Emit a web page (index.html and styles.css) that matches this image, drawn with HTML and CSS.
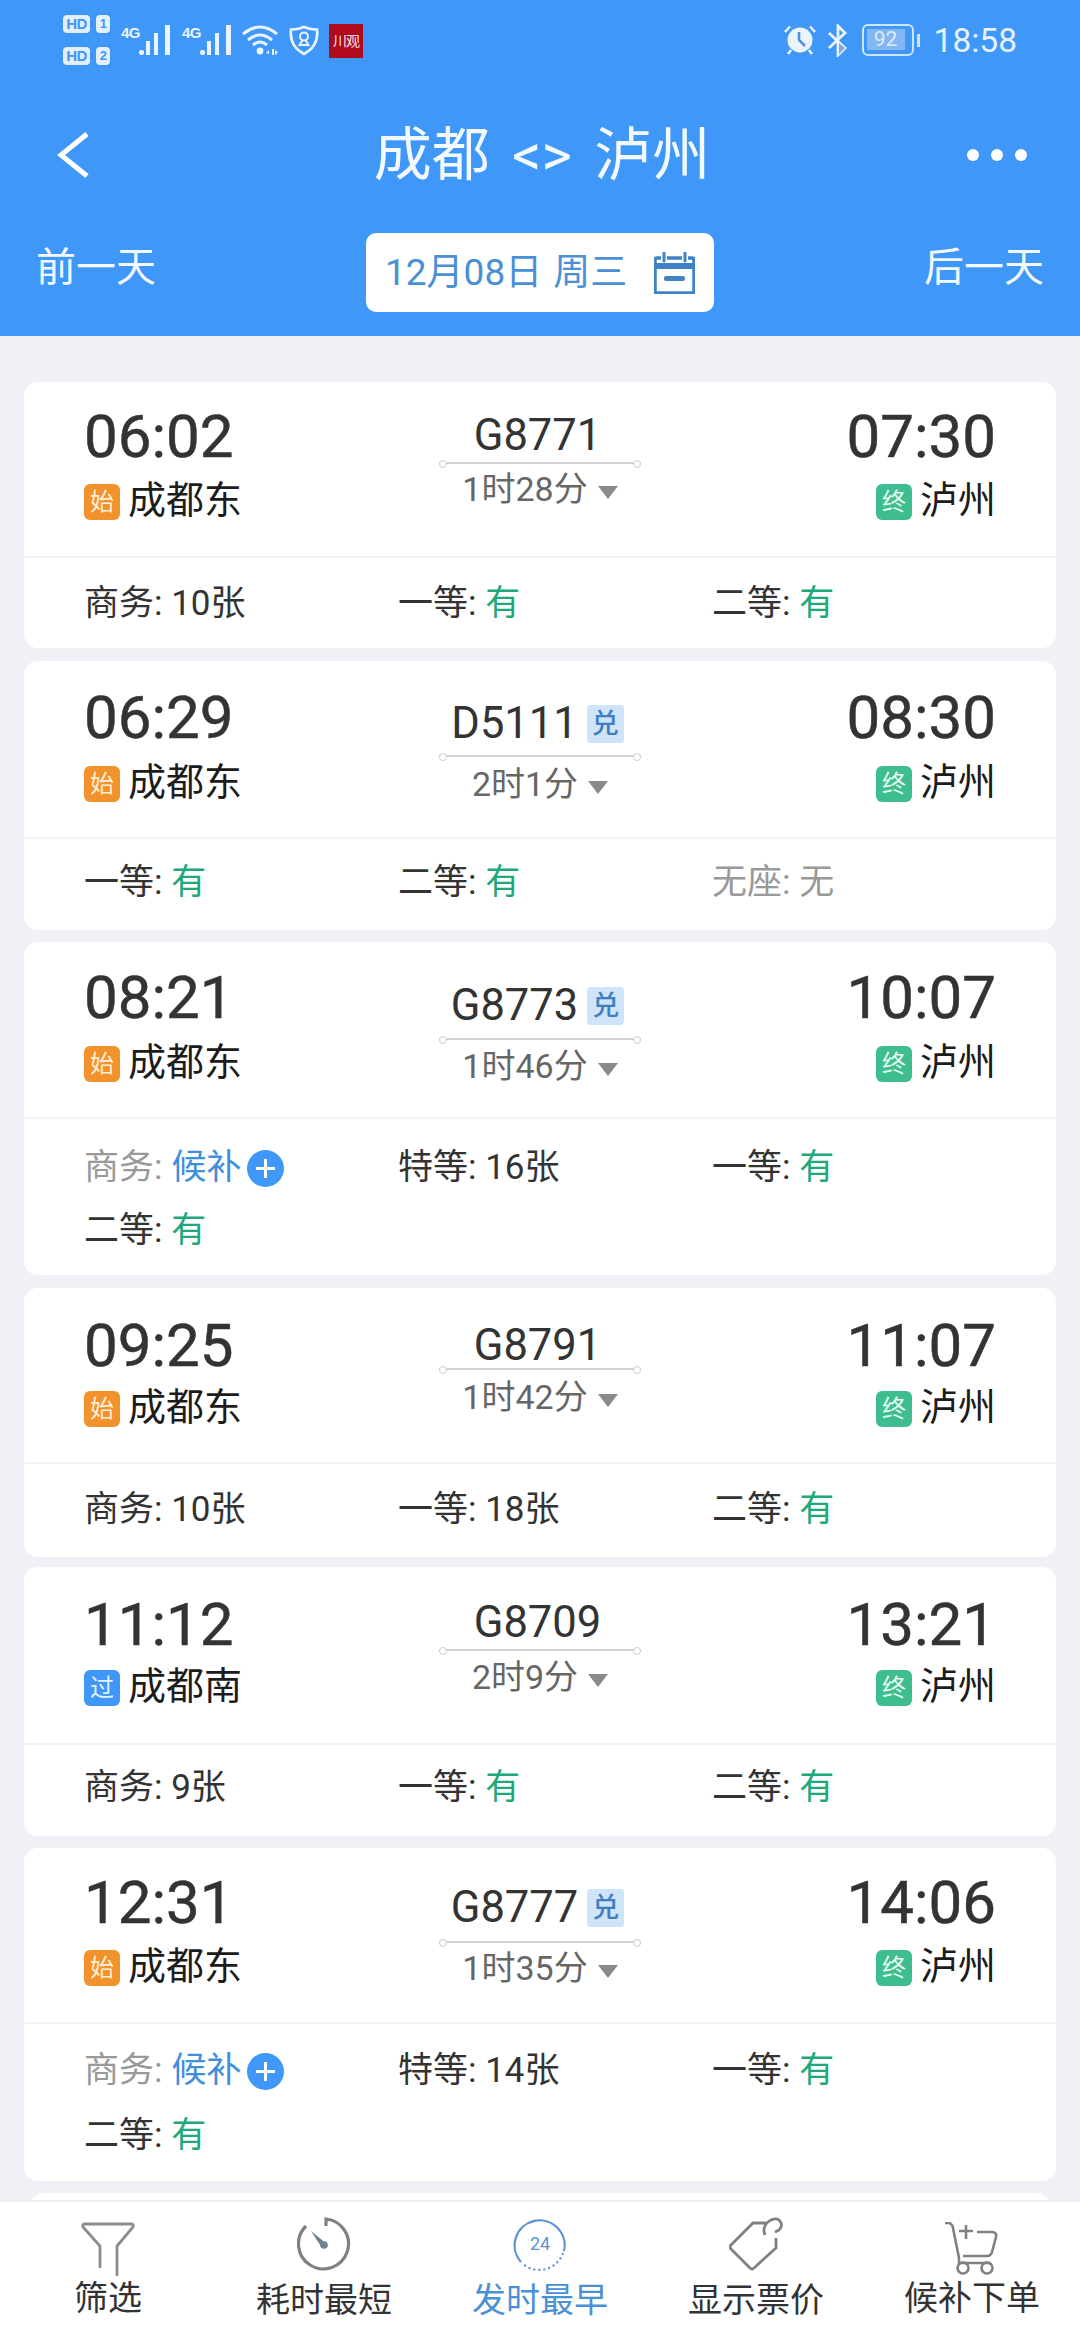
FILE: index.html
```html
<!DOCTYPE html>
<html lang="zh-CN">
<head>
<meta charset="utf-8">
<title>成都 &lt;&gt; 泸州</title>
<link rel="stylesheet" href="styles.css">
</head>
<body>
<div class="app">
  <header class="head">
    <div class="status">
      <div class="status-left">
        <div class="hd">
          <div class="hd-row"><span class="chip">HD</span><span class="chip num">1</span></div>
          <div class="hd-row"><span class="chip">HD</span><span class="chip num">2</span></div>
        </div>
        <svg class="sig" viewBox="0 0 50 30"><text x="0" y="13" class="sig-t">4G</text><rect x="18" y="25" width="5" height="5" rx="2"/><rect x="25" y="16" width="4" height="14"/><rect x="33" y="8" width="4" height="22"/><rect x="44" y="0" width="5" height="30"/></svg>
        <svg class="sig" viewBox="0 0 50 30"><text x="0" y="13" class="sig-t">4G</text><rect x="18" y="25" width="5" height="5" rx="2"/><rect x="25" y="16" width="4" height="14"/><rect x="33" y="8" width="4" height="22"/><rect x="44" y="0" width="5" height="30"/></svg>
        <svg class="wifi" viewBox="0 0 37 30"><g fill="none" stroke="#eaf3fe" stroke-width="3"><path d="M1 9Q18-5 35 9"/><path d="M6 15Q18 5 30 15"/><path d="M11 20Q18 14 25 20"/></g><circle cx="18" cy="26" r="3.4" fill="#eaf3fe"/><path d="M24 28l3-3v4zM30 24h2v6h-2zM33 25l3 2.500-3 2.500z" fill="#eaf3fe"/></svg>
        <svg class="shield" viewBox="0 0 30 31"><path d="M15 2Q22 5 28 4.500Q30 21 15 29Q0 21 2 4.500Q8 5 15 2Z" fill="none" stroke="#eaf3fe" stroke-width="2.600"/><circle cx="15" cy="11.500" r="4" fill="none" stroke="#eaf3fe" stroke-width="2"/><path d="M13.500 15L10.500 20H19.500L16.500 15" fill="none" stroke="#eaf3fe" stroke-width="2"/></svg>
        <span class="mark">川观</span>
      </div>
      <div class="status-right">
        <svg class="alarm" viewBox="0 0 32 30"><circle cx="16" cy="15" r="12.500" fill="#eaf3fe"/><path d="M15 7V15L21 21" fill="none" stroke="#4f90d8" stroke-width="2.500"/><path d="M1 7L6 1.500M31 7L26 1.500M4 29L7 25M28 29L25 25" stroke="#eaf3fe" stroke-width="2.500"/></svg>
        <svg class="bt" viewBox="0 0 22 33"><path d="M2 9L18 24L11 31V2L18 9L2 24" fill="none" stroke="#eaf3fe" stroke-width="2.800"/><path d="M12 19L18 24L12 30Z" fill="#7fa8e8"/></svg>
        <div class="batt"><span class="batt-body"><span class="batt-fill">92</span></span><span class="batt-nub"></span></div>
        <span class="clock">18:58</span>
      </div>
    </div>
    <div class="nav">
      <svg class="back" viewBox="0 0 32 46"><path d="M30 2L4 23L30 44" fill="none" stroke="#fff" stroke-width="5"/></svg>
      <h1 class="title">成都 &lt;&gt; 泸州</h1>
      <div class="dots"><i></i><i></i><i></i></div>
    </div>
    <div class="dates">
      <span class="day">前一天</span>
      <div class="date-box">
        <span class="date-text">12月08日 周三</span>
        <svg class="cal" viewBox="0 0 41 42"><path d="M3 6H38Q40 6 40 8V39Q40 41 38 41H3Q1 41 1 39V8Q1 6 3 6Z" fill="none" stroke="#3f83c6" stroke-width="3.500"/><path d="M1 14H40" stroke="#3f83c6" stroke-width="6"/><path d="M10 1V10M31 1V10" stroke="#fff" stroke-width="6"/><path d="M10 1V9M31 1V9" stroke="#3f83c6" stroke-width="3" stroke-linecap="round"/><rect x="10" y="24" width="21" height="5" rx="2" fill="#3f83c6"/></svg>
      </div>
      <span class="day">后一天</span>
    </div>
  </header>

  <main class="list">
    <article class="card c1">
      <div class="trip">
        <div class="end"><div class="time">06:02</div><div class="station"><span class="tag orange">始</span>成都东</div></div>
        <div class="train"><div class="no-row"><span class="no">G8771</span></div><div class="rule"></div><div class="dur">1时28分<i class="tri"></i></div></div>
        <div class="end right"><div class="time">07:30</div><div class="station"><span class="tag green">终</span>泸州</div></div>
      </div>
      <div class="fares">
        <span>商务: 10张</span><span>一等: <b class="yes">有</b></span><span>二等: <b class="yes">有</b></span>
      </div>
    </article>

    <article class="card c2">
      <div class="trip">
        <div class="end"><div class="time">06:29</div><div class="station"><span class="tag orange">始</span>成都东</div></div>
        <div class="train"><div class="no-row"><span class="no">D5111</span><span class="dui">兑</span></div><div class="rule"></div><div class="dur">2时1分<i class="tri"></i></div></div>
        <div class="end right"><div class="time">08:30</div><div class="station"><span class="tag green">终</span>泸州</div></div>
      </div>
      <div class="fares">
        <span>一等: <b class="yes">有</b></span><span>二等: <b class="yes">有</b></span><span class="off">无座: 无</span>
      </div>
    </article>

    <article class="card c3">
      <div class="trip">
        <div class="end"><div class="time">08:21</div><div class="station"><span class="tag orange">始</span>成都东</div></div>
        <div class="train"><div class="no-row"><span class="no">G8773</span><span class="dui">兑</span></div><div class="rule"></div><div class="dur">1时46分<i class="tri"></i></div></div>
        <div class="end right"><div class="time">10:07</div><div class="station"><span class="tag green">终</span>泸州</div></div>
      </div>
      <div class="fares">
        <span class="wait"><span class="off">商务:</span> <b class="blue">候补</b><i class="plus"></i></span><span>特等: 16张</span><span>一等: <b class="yes">有</b></span><span>二等: <b class="yes">有</b></span>
      </div>
    </article>

    <article class="card c4">
      <div class="trip">
        <div class="end"><div class="time">09:25</div><div class="station"><span class="tag orange">始</span>成都东</div></div>
        <div class="train"><div class="no-row"><span class="no">G8791</span></div><div class="rule"></div><div class="dur">1时42分<i class="tri"></i></div></div>
        <div class="end right"><div class="time">11:07</div><div class="station"><span class="tag green">终</span>泸州</div></div>
      </div>
      <div class="fares">
        <span>商务: 10张</span><span>一等: 18张</span><span>二等: <b class="yes">有</b></span>
      </div>
    </article>

    <article class="card c5">
      <div class="trip">
        <div class="end"><div class="time">11:12</div><div class="station"><span class="tag blue-bg">过</span>成都南</div></div>
        <div class="train"><div class="no-row"><span class="no">G8709</span></div><div class="rule"></div><div class="dur">2时9分<i class="tri"></i></div></div>
        <div class="end right"><div class="time">13:21</div><div class="station"><span class="tag green">终</span>泸州</div></div>
      </div>
      <div class="fares">
        <span>商务: 9张</span><span>一等: <b class="yes">有</b></span><span>二等: <b class="yes">有</b></span>
      </div>
    </article>

    <article class="card c6">
      <div class="trip">
        <div class="end"><div class="time">12:31</div><div class="station"><span class="tag orange">始</span>成都东</div></div>
        <div class="train"><div class="no-row"><span class="no">G8777</span><span class="dui">兑</span></div><div class="rule"></div><div class="dur">1时35分<i class="tri"></i></div></div>
        <div class="end right"><div class="time">14:06</div><div class="station"><span class="tag green">终</span>泸州</div></div>
      </div>
      <div class="fares">
        <span class="wait"><span class="off">商务:</span> <b class="blue">候补</b><i class="plus"></i></span><span>特等: 14张</span><span>一等: <b class="yes">有</b></span><span>二等: <b class="yes">有</b></span>
      </div>
    </article>

    <article class="card peek"></article>
  </main>

  <nav class="tabs">
    <div class="tab up">
      <svg class="tab-ic" viewBox="0 0 54 54"><path d="M19 46V24L2 5Q1 2 4 2H50Q53 2 52 5L36 24V54" fill="none" stroke="#8c8c8c" stroke-width="2.800"/></svg>
      <span>筛选</span>
    </div>
    <div class="tab">
      <svg class="tab-ic" viewBox="0 0 54 54"><path d="M29 9V2A25 25 0 1 1 9 9" fill="none" stroke="#808080" stroke-width="3.200"/><path d="M14 14L25 23L30 28L25 31Z" fill="#6f8090"/><circle cx="27" cy="28" r="3.800" fill="#6f8090"/></svg>
      <span>耗时最短</span>
    </div>
    <div class="tab on">
      <svg class="tab-ic" viewBox="0 0 54 54"><path d="M8 45A25 25 0 1 1 51 34" fill="none" stroke="#5b93d0" stroke-width="2.200"/><path d="M50 36A25 25 0 0 1 9 46" fill="none" stroke="#5b93d0" stroke-width="2.200" stroke-dasharray="2 3"/><text x="27" y="33" text-anchor="middle" class="ic-24">24</text></svg>
      <span>发时最早</span>
    </div>
    <div class="tab">
      <svg class="tab-ic" viewBox="0 0 54 54"><path d="M37 6H24L2 28Q0 30 2 32L21 51Q23 53 25 51L47 31V21" fill="none" stroke="#808080" stroke-width="2.800"/><path d="M36 18Q33 10 39 5Q45 0 50 3Q55 8 50 13L46 15" fill="none" stroke="#808080" stroke-width="2.800"/></svg>
      <span>显示票价</span>
    </div>
    <div class="tab up">
      <svg class="tab-ic" viewBox="0 0 54 54"><path d="M0 1H3Q7 1 8 6L14 36V42" fill="none" stroke="#808080" stroke-width="2.600"/><path d="M21 3V17M14 9H28M32 10H47Q52 10 51 15L47 30Q46 34 42 34H18M16 41H46" fill="none" stroke="#808080" stroke-width="2.600"/><circle cx="18" cy="46" r="5.500" fill="none" stroke="#808080" stroke-width="2.600"/><circle cx="42" cy="46" r="5.500" fill="none" stroke="#808080" stroke-width="2.600"/></svg>
      <span>候补下单</span>
    </div>
  </nav>
</div>
</body>
</html>
```

FILE: styles.css
```css
* { box-sizing: border-box; }
html, body { margin: 0; padding: 0; }
body { font-family: Roboto, "Noto Sans CJK SC", sans-serif; background: #f0f1f6; }
b { font-weight: 400; }
i { font-style: normal; display: block; }

.app { width: 1080px; height: 2340px; display: flex; flex-direction: column; overflow: hidden; }

/* header */
.head { height: 336px; flex: none; background: #3f97f8; color: #fff; display: flex; flex-direction: column; }
.status { height: 72px; flex: none; padding: 15px 63px 0; display: flex; justify-content: space-between; align-items: flex-start; }
.status-left { display: flex; gap: 11px; align-items: flex-start; }
.status-right { display: flex; align-items: flex-start; padding-top: 9px; }
.hd { width: 47px; display: flex; flex-direction: column; gap: 14px; }
.hd-row { display: flex; justify-content: space-between; height: 18px; }
.chip { height: 18px; width: 27px; background: #e4effc; color: #3f97f8; border-radius: 4px; font: 700 15px/18px "Liberation Sans", sans-serif; text-align: center; letter-spacing: -0.5px; }
.chip.num { width: 14px; font-size: 13px; }
.sig { width: 50px; height: 30px; margin-top: 10px; fill: #eaf3fe; }
.sig-t { font: 700 15px "Liberation Sans", sans-serif; letter-spacing: -0.5px; }
.wifi { width: 37px; height: 30px; margin: 10px 0 0 -1px; }
.shield { width: 30px; height: 31px; margin: 10px 0 0 -1px; }
.mark { width: 34px; height: 34px; margin: 9px 0 0 -1px; background: #b00a1c; color: #f6e6e6; font-size: 14px; line-height: 34px; text-align: center; white-space: nowrap; letter-spacing: -1px; }
.alarm { width: 32px; height: 30px; margin: 1px 0 0; }
.bt { width: 22px; height: 33px; margin: 0 13px 0 11px; }
.batt { display: flex; align-items: center; height: 32px; gap: 3px; margin-right: 14px; }
.batt-body { width: 52px; height: 32px; border: 2.5px solid #cfe4fb; border-radius: 6px; padding: 3px; display: block; }
.batt-fill { display: block; width: 38px; height: 21px; background: #84b6f2; color: #dcebfd; font-size: 21px; line-height: 21px; text-align: center; }
.batt-nub { width: 3px; height: 13px; background: #cfe4fb; }
.clock { font-size: 33.5px; line-height: 34px; color: #e6f1fd; font-weight: 400; }

.nav { height: 161px; flex: none; padding: 5px 53px 0 57px; display: grid; grid-template-columns: 1fr auto 1fr; align-items: center; }
.back { width: 32px; height: 46px; }
.title { margin: 0; font-size: 58px; line-height: 70px; font-weight: 400; text-align: center; color: #f4f9ff; word-spacing: 8px; }
.dots { justify-self: end; display: flex; gap: 12px; }
.dots i { width: 12px; height: 12px; border-radius: 50%; background: #fff; }

.dates { padding: 0 36px; display: flex; justify-content: space-between; align-items: flex-start; }
.day { font-size: 40px; line-height: 50px; margin-top: 10px; color: #f4f9ff; }
.date-box { width: 348px; height: 79px; background: #fff; border-radius: 10px; display: flex; align-items: center; justify-content: space-between; padding: 0 19px; }
.date-text { color: #4a90d6; font-size: 37px; line-height: 44px; white-space: nowrap; word-spacing: 2px; }
.cal { width: 41px; height: 42px; }

/* list */
.list { flex: 1; min-height: 0; overflow: hidden; padding: 33px 24px 0; display: flex; flex-direction: column; }
.card { flex: none; background: #fff; border-radius: 14px; margin-top: var(--gap, 13px); }
.peek { height: 60px; margin-left: 6px; margin-right: 6px; margin-top: 12px; }

.trip { display: grid; grid-template-columns: 1fr auto 1fr; padding: var(--top) 60px var(--bot); border-bottom: 2px solid #f3f3f5; }
.time { font-size: 60px; line-height: 60px; color: #333; -webkit-text-stroke: 0.5px #333; }
.station { display: flex; align-items: center; margin-top: calc(var(--st) - 3px); margin-bottom: 3px; height: 44px; font-size: 38px; color: #1c1c1c; }
.tag { width: 36px; height: 36px; margin: 12px 8px 0 0; border-radius: 6px; font-size: 24px; line-height: 36px; text-align: center; color: #ffeeda; }
.orange { background: #f2922c; }
.green { background: #3ebd8e; color: #e6fff4; }
.blue-bg { background: #3f97f8; color: #e6f2ff; }
.end.right { display: flex; flex-direction: column; align-items: flex-end; }

.train { width: 202px; display: flex; flex-direction: column; align-items: center; margin-top: var(--no); margin-bottom: -30px; }
.no-row { display: flex; align-items: center; gap: 9px; height: 50px; white-space: nowrap; margin-right: 5px; }
.no { font-size: 43.5px; line-height: 50px; color: #333; }
.dui { width: 37px; height: 38px; background: #cfe3f9; color: #3f7fc0; border-radius: 4px; font-size: 27px; line-height: 38px; text-align: center; font-weight: 500; }
.rule { width: 202px; height: 2px; margin-top: var(--rule); background: #d2d2d6; position: relative; flex: none; }
.rule::before, .rule::after { content: ""; position: absolute; top: -2px; width: 6px; height: 6px; border-radius: 50%; background: #fff; border: 1px solid #ccc; }
.rule::before { left: 0; }
.rule::after { right: 0; }
.dur { display: flex; align-items: center; gap: 10px; margin-top: var(--dur); font-size: 34px; line-height: 40px; color: #666; }
.tri { width: 0; height: 0; border-left: 10px solid transparent; border-right: 10px solid transparent; border-top: 13px solid #8a8a8a; margin-top: 6px; }

.fares { display: grid; grid-template-columns: 314px 314px 1fr; padding: var(--ft) 60px var(--fb); row-gap: var(--fg, 29px); font-size: 35px; line-height: 34px; color: #333; }
.fares span { white-space: nowrap; }
.fares .off { color: #999; }
.yes { color: #1fa878; }
.blue { color: #3f8fdc; }
.wait { display: flex; align-items: center; gap: 7px; height: 34px; }
.wait b { margin-left: 2px; margin-right: -2px; }
.plus { width: 37px; height: 37px; border-radius: 50%; background: #3f97f8; position: relative; flex: none; }
.plus::before { content: ""; position: absolute; left: 9px; top: 17px; width: 19px; height: 3px; background: #fff; }
.plus::after { content: ""; position: absolute; left: 17px; top: 9px; width: 3px; height: 19px; background: #fff; }

/* per-row offsets */
.c1 { --top: 25px; --st: 10px; --bot: 35px; --no: 4px; --rule: 1px; --dur: 5px; --ft: 29px; --fb: 27px; }
.c2 { --top: 27px; --st: 11px; --bot: 34px; --no: 11px; --rule: 6px; --dur: 7px; --ft: 27px; --fb: 30px; }
.c3 { --gap: 12px; --top: 26px; --st: 11px; --bot: 34px; --no: 13px; --rule: 7px; --dur: 6px; --ft: 32px; --fb: 27px; }
.c4 { --top: 28px; --st: 8px; --bot: 34px; --no: 5px; --rule: -3px; --dur: 7px; --ft: 29px; --fb: 30px; }
.c5 { --gap: 10px; --top: 28px; --st: 8px; --bot: 36px; --no: 3px; --rule: 1px; --dur: 6px; --ft: 26px; --fb: 31px; }
.c6 { --gap: 12px; --top: 25px; --st: 10px; --bot: 35px; --no: 10px; --rule: 8px; --dur: 5px; --ft: 30px; --fb: 28px; --fg: 31px; }

/* bottom bar */
.tabs { height: 140px; flex: none; background: #fff; border-top: 2px solid #efeff3; display: grid; grid-template-columns: repeat(5, 1fr); position: relative; }
.tab { display: flex; flex-direction: column; align-items: center; padding-top: 15px; font-size: 34px; line-height: 44px; color: #333; }
.tab.on { color: #4a90d6; }
.tab-ic { width: 54px; height: 54px; margin-bottom: 7px; }
.tab.up .tab-ic { margin-top: 5px; margin-bottom: 0; }
.ic-24 { font-size: 18px; fill: #5b93d0; }
```
